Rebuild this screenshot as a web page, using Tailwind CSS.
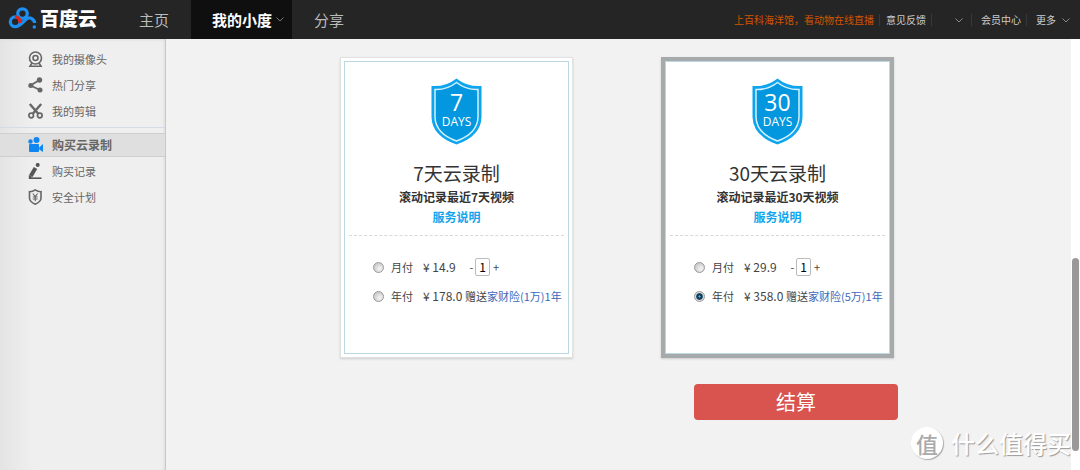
<!DOCTYPE html>
<html lang="zh-CN">
<head>
<meta charset="utf-8">
<meta name="viewport" content="width=device-width, initial-scale=1">
<title>百度云 - 购买云录制</title>
<script src="https://cdn.jsdelivr.net/npm/@tailwindcss/browser@4"></script>
</head>
<body class="relative flex min-h-screen flex-col overflow-x-hidden bg-[#f2f2f2] font-['Noto_Sans_CJK_SC',sans-serif] text-[#333]">

<header class="flex h-[39px] shrink-0 items-center justify-between bg-[#252525]">
  <div class="flex h-full items-center">
    <a href="#" class="flex w-[118px] items-center pb-[3px] pl-2 text-[19px] leading-6 font-black text-white">
      <svg class="mr-[3px] h-[23px] w-[29px]" viewBox="0 0 88 70" fill="none" stroke-width="10" aria-hidden="true">
        <circle cx="22" cy="45" r="15" stroke="#1c8ff0"/>
        <path d="M33 57Q44 49 52 40Q60 30 70 34Q81 39 81 49" stroke="#1c8ff0"/>
        <circle cx="44" cy="20" r="14.500" stroke="#1c8ff0"/>
        <path d="M21 30Q37 31 37 49" stroke="#e2231a"/>
        <circle cx="80" cy="61" r="5.500" fill="#1c8ff0"/>
      </svg>百度云
    </a>
    <nav class="flex h-full text-[15px] leading-[39px]">
      <a href="#" class="w-[73px] pl-[21px] text-[#bbb]">主页</a>
      <a href="#" class="flex w-[101px] items-center bg-[#0f0f0f] pl-[21px] font-bold text-white">我的小度
        <svg class="ml-1 h-[5px] w-2" viewBox="0 0 8 5" fill="none" stroke="#777" aria-hidden="true"><path d="M.5.5 4 4 7.500.5"/></svg>
      </a>
      <a href="#" class="pl-[22px] text-[#bbb]">分享</a>
    </nav>
  </div>
  <nav class="flex items-center pt-px pr-[10px] text-[10px] leading-3 text-[#ccc]">
    <a href="#" class="pr-[5px] text-[#d35400]">上百科海洋馆，看动物在线直播</a>
    <a href="#" class="border-l border-[#383838] pr-[5px] pl-[6px]">意见反馈</a>
    <button type="button" aria-label="账户" class="flex h-3 w-10 items-center justify-end border-l border-[#383838] pr-2">
      <svg class="h-[5px] w-2" viewBox="0 0 8 5" fill="none" stroke="#888" aria-hidden="true"><path d="M.5.5 4 4 7.500.5"/></svg>
    </button>
    <a href="#" class="border-l border-[#383838] pr-[5px] pl-[9px]">会员中心</a>
    <a href="#" class="flex items-center border-l border-[#383838] pl-[9px]">更多
      <svg class="ml-[6px] h-[5px] w-2" viewBox="0 0 8 5" fill="none" stroke="#888" aria-hidden="true"><path d="M.5.5 4 4 7.500.5"/></svg>
    </a>
  </nav>
</header>

<div class="flex flex-1">
  <aside class="w-[166px] shrink-0 border-r border-[#c8c8c8] bg-linear-to-r from-[#e4e4e4] via-[#efefef] via-20% to-[#efefef] pt-[7px] text-[11px] text-[#666] shadow-[inset_-3px_0_3px_-2px_#ddd,inset_0_3px_3px_-2px_#ddd]">
    <nav>
      <a href="#" class="flex h-[26px] items-center gap-2 pl-7">
        <svg class="size-4" viewBox="0 0 16 16" fill="none" stroke="#666" stroke-width="1.600" aria-hidden="true"><circle cx="7.500" cy="7" r="6"/><circle cx="7.500" cy="7" r="2.500"/><path d="M4 12 2 15.200H13L11 12"/></svg>我的摄像头</a>
      <a href="#" class="flex h-[26px] items-center gap-2 pl-7">
        <svg class="size-4" viewBox="0 0 16 16" fill="#666" stroke="#666" stroke-width="1.800" aria-hidden="true"><path d="M11.500 3 2.500 8.500 12 13" fill="none"/><g stroke="none"><circle cx="11.500" cy="3" r="2.700"/><circle cx="2.800" cy="8.500" r="2.500"/><circle cx="12" cy="13" r="2.500"/></g></svg>热门分享</a>
      <a href="#" class="flex h-[26px] items-center gap-2 pl-7">
        <svg class="size-4" viewBox="0 0 16 16" fill="none" stroke="#666" aria-hidden="true"><g stroke-width="1.700"><circle cx="3.200" cy="12.500" r="2.300"/><circle cx="11.800" cy="12.500" r="2.300"/></g><path d="M1.800 1 10.500 11M13.200 1 4.500 11" stroke-width="2.400"/></svg>我的剪辑</a>
      <div class="mt-[3px] mb-[5px] h-px bg-[#d5dce8]"></div>
      <a href="#" aria-current="page" class="mb-px flex h-6 items-center gap-2 border-y border-[#cfcfcf] bg-[#dfdfdf] pl-7 text-[12px] font-bold">
        <svg class="size-4" viewBox="0 0 16 16" fill="#1086f0" aria-hidden="true"><circle cx="2.500" cy="4.500" r="2.200"/><circle cx="8.500" cy="3" r="3"/><rect x="1" y="7" width="10" height="8" rx="1"/><path d="M11.200 10.500 15 7V15L11.200 12.500Z"/></svg>购买云录制</a>
      <a href="#" class="flex h-[26px] items-center gap-2 pl-7">
        <svg class="size-4" viewBox="0 0 16 16" fill="none" stroke="#555" aria-hidden="true"><path d="M7.500 5 2.800 13" stroke-width="4"/><path d="M1 15.200H13.500" stroke-width="1.600"/><path d="M.8 16V12L4.500 14Z" fill="#555" stroke="none"/><circle cx="9.700" cy="1.900" r="2" fill="#555" stroke="none"/></svg>购买记录</a>
      <a href="#" class="flex h-[26px] items-center gap-2 pl-7">
        <svg class="size-4" viewBox="0 0 16 16" fill="none" stroke="#666" aria-hidden="true"><path d="M7.200.9Q10 2.800 13 2.700V9.500Q12.500 13 7.200 15.200Q2 13 1.500 9.500V2.700Q4.500 2.800 7.200.9Z" stroke-width="1.600"/><path d="M4.800 4.500 7.200 7.500 9.600 4.500M7.200 7.500V12.200M4.800 8H9.600M4.800 10H9.600" stroke-width="1.100"/></svg>安全计划</a>
    </nav>
  </aside>

  <main class="flex-1 pt-[18px] pr-[3px]">
    <form class="mx-auto w-[554px]">
      <div class="flex justify-between">

        <section class="w-[233px] border border-[#e2e2e2] bg-white p-[3px] shadow-[0_1px_2px_#ccc]">
          <div class="border border-[#bcd8e4] px-1 pt-4 pb-[47px] text-center">
            <svg class="mx-auto h-[67px] w-[51px]" viewBox="0 0 51 67" role="img" aria-label="7 DAYS">
              <path d="M25.500.5Q36 9 50.500 8V39Q50 58 25.500 66.500Q1 58 .5 39V8Q15 9 25.500.5Z" fill="#0fa5ee"/>
              <path d="M25.500 4.500Q35 12 47 11.500V39Q46.500 55.500 25.500 63Q4.500 55.500 4 39V11.500Q16 12 25.500 4.500Z" fill="#0397df" stroke="#d4f1ff" stroke-width="1.500"/>
              <text x="25.500" y="33" text-anchor="middle" fill="#fff" font-family="Open Sans" font-size="23" font-weight="500">7</text>
              <text x="25.500" y="48" text-anchor="middle" fill="#fff" font-family="Open Sans" font-size="12" font-weight="500">DAYS</text>
            </svg>
            <h2 class="mt-[14px] text-[19px] leading-7">7天云录制</h2>
            <p class="text-[12px] leading-5 font-bold">滚动记录最近7天视频</p>
            <a href="#" class="block text-[12px] leading-5 font-bold text-[#12a5ee]">服务说明</a>
            <div class="mt-2 border-t border-dashed border-[#d8d8d8]"></div>
            <div class="mt-[21px] flex h-5 items-center pl-6 text-[11px] text-[#444]">
              <label class="flex w-[95px] items-center"><input type="radio" name="p7" class="mr-[7px] size-[11px] appearance-none rounded-full border border-[#999] bg-[radial-gradient(circle_at_65%_65%,#f5f5f5,#bbb)] checked:bg-[radial-gradient(circle,#4fb3dc_0_12%,#123f5e_22%_45%,#ddd_60%)]">月付<span class="ml-[10px] text-[12px]">¥ 14.9</span></label>
              <button type="button" aria-label="减少" class="w-[7px]">-</button>
              <input type="text" value="1" aria-label="月数" class="h-[18px] w-[15px] rounded-xs border border-[#bbb] bg-white text-center text-[12px] text-black">
              <button type="button" aria-label="增加" class="ml-[3px]">+</button>
            </div>
            <div class="mt-[9px] flex h-5 items-center pl-6 text-[11px] whitespace-nowrap text-[#444]">
              <label class="flex w-[92px] items-center"><input type="radio" name="p7" class="mr-[7px] size-[11px] appearance-none rounded-full border border-[#999] bg-[radial-gradient(circle_at_65%_65%,#f5f5f5,#bbb)] checked:bg-[radial-gradient(circle,#4fb3dc_0_12%,#123f5e_22%_45%,#ddd_60%)]">年付<span class="ml-[10px] text-[12px]">¥ 178.0</span></label>
              赠送<a href="#" class="text-[#3c68b8]">家财险(1万)1年</a>
            </div>
          </div>
        </section>

        <section class="w-[233px] border-4 border-[#a6aaab] bg-white shadow-[0_1px_2px_#ccc]">
          <div class="border border-[#bcd8e4] px-1 pt-4 pb-[47px] text-center">
            <svg class="mx-auto h-[67px] w-[51px]" viewBox="0 0 51 67" role="img" aria-label="30 DAYS">
              <path d="M25.500.5Q36 9 50.500 8V39Q50 58 25.500 66.500Q1 58 .5 39V8Q15 9 25.500.5Z" fill="#0fa5ee"/>
              <path d="M25.500 4.500Q35 12 47 11.500V39Q46.500 55.500 25.500 63Q4.500 55.500 4 39V11.500Q16 12 25.500 4.500Z" fill="#0397df" stroke="#d4f1ff" stroke-width="1.500"/>
              <text x="25.500" y="33" text-anchor="middle" fill="#fff" font-family="Open Sans" font-size="23" font-weight="500">30</text>
              <text x="25.500" y="48" text-anchor="middle" fill="#fff" font-family="Open Sans" font-size="12" font-weight="500">DAYS</text>
            </svg>
            <h2 class="mt-[14px] text-[19px] leading-7">30天云录制</h2>
            <p class="text-[12px] leading-5 font-bold">滚动记录最近30天视频</p>
            <a href="#" class="block text-[12px] leading-5 font-bold text-[#12a5ee]">服务说明</a>
            <div class="mt-2 border-t border-dashed border-[#d8d8d8]"></div>
            <div class="mt-[21px] flex h-5 items-center pl-6 text-[11px] text-[#444]">
              <label class="flex w-[95px] items-center"><input type="radio" name="p30" class="mr-[7px] size-[11px] appearance-none rounded-full border border-[#999] bg-[radial-gradient(circle_at_65%_65%,#f5f5f5,#bbb)] checked:bg-[radial-gradient(circle,#4fb3dc_0_12%,#123f5e_22%_45%,#ddd_60%)]">月付<span class="ml-[10px] text-[12px]">¥ 29.9</span></label>
              <button type="button" aria-label="减少" class="w-[7px]">-</button>
              <input type="text" value="1" aria-label="月数" class="h-[18px] w-[15px] rounded-xs border border-[#bbb] bg-white text-center text-[12px] text-black">
              <button type="button" aria-label="增加" class="ml-[3px]">+</button>
            </div>
            <div class="mt-[9px] flex h-5 items-center pl-6 text-[11px] whitespace-nowrap text-[#444]">
              <label class="flex w-[92px] items-center"><input type="radio" name="p30" checked class="mr-[7px] size-[11px] appearance-none rounded-full border border-[#999] bg-[radial-gradient(circle_at_65%_65%,#f5f5f5,#bbb)] checked:bg-[radial-gradient(circle,#4fb3dc_0_12%,#123f5e_22%_45%,#ddd_60%)]">年付<span class="ml-[10px] text-[12px]">¥ 358.0</span></label>
              赠送<a href="#" class="text-[#3c68b8]">家财险(5万)1年</a>
            </div>
          </div>
        </section>
      </div>

      <div class="mt-[26px] -mr-1 flex justify-end">
        <button type="submit" class="h-9 w-[204px] rounded-sm bg-[#d9534f] text-[20px] leading-9 text-white">结算</button>
      </div>
    </form>
  </main>

  <div class="w-[9px] shrink-0 bg-white px-px pt-[219px]" aria-hidden="true">
    <div class="h-[193px] rounded-full bg-[#999]"></div>
  </div>
</div>

<div class="absolute right-[9px] bottom-[11px] flex items-center gap-2 text-[24px] leading-8 font-medium text-white [text-shadow:1px_1px_1px_#999]">
  <span class="flex size-8 items-center justify-center rounded-full bg-white text-[22px] text-[#aaa] shadow-[1px_1px_1px_#aaa] [text-shadow:none]">值</span>什么值得买
</div>
</body>
</html>
